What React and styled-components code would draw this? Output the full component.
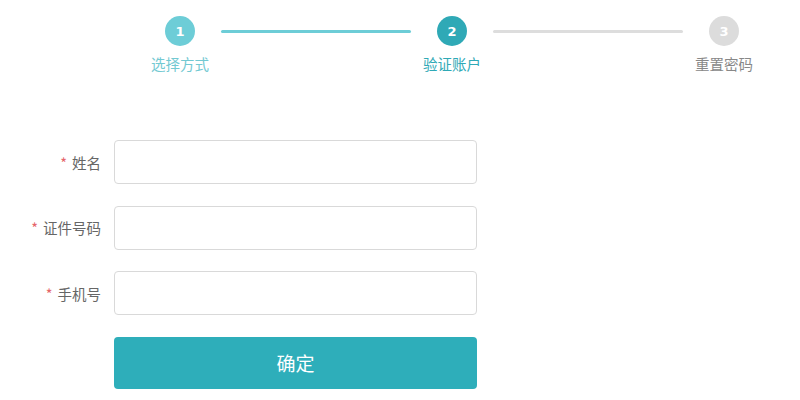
import React from "react";
import styled, { createGlobalStyle } from "styled-components";

const Global = createGlobalStyle`
  body {
    margin: 0;
    background: #fff;
    font-family: "Noto Sans CJK SC", "Noto Sans", sans-serif;
  }
`;

const Page = styled.div`
  width: 800px;
  height: 400px;
  overflow: hidden;
`;

const Steps = styled.div`
  display: flex;
  align-items: flex-start;
  width: 604px;
  margin-left: 150px;
  padding-top: 16px;
`;

const Step = styled.div`
  width: 60px;
  display: flex;
  flex-direction: column;
  align-items: center;
`;

const Dot = styled.div`
  width: 30px;
  height: 30px;
  border-radius: 50%;
  background: ${(p) => p.$bg};
  color: #fff;
  font-family: "DejaVu Sans", sans-serif;
  font-weight: bold;
  font-size: 13px;
  display: flex;
  align-items: center;
  justify-content: center;
`;

const StepLabel = styled.div`
  margin-top: 8px;
  font-size: 14.5px;
  line-height: 20px;
  white-space: nowrap;
  color: ${(p) => p.$color};
`;

const Line = styled.div`
  flex: 1;
  height: 3px;
  margin: 14px 11px 0;
  border-radius: 2px;
  background: ${(p) => p.$bg};
`;

const Form = styled.div`
  margin-top: 66px;
  display: flex;
  flex-direction: column;
  gap: 21.5px;
`;

const Row = styled.div`
  display: flex;
  align-items: center;
`;

const Label = styled.div`
  width: 101px;
  margin-right: 13px;
  text-align: right;
  font-size: 14.5px;
  color: #666;
  white-space: nowrap;
`;

const Star = styled.span`
  color: #e5666a;
  margin-right: 5px;
`;

const Input = styled.input`
  box-sizing: border-box;
  width: 363px;
  height: 44px;
  border: 1px solid #d9d9d9;
  border-radius: 4px;
  outline: none;
  padding: 0 10px;
  font-size: 14px;
`;

const Button = styled.button`
  margin-left: 114px;
  width: 363px;
  height: 52px;
  border: none;
  border-radius: 4px;
  background: #2eaeba;
  color: #fff;
  font-family: "Noto Sans CJK SC", sans-serif;
  font-size: 19px;
  cursor: pointer;
`;

const steps = [
  { n: 1, text: "选择方式", bg: "#6dcdd7", color: "#73c9d2" },
  { n: 2, text: "验证账户", bg: "#2fa9b6", color: "#2fa9b6" },
  { n: 3, text: "重置密码", bg: "#dcdcdc", color: "#888" },
];

const fields = ["姓名", "证件号码", "手机号"];

export default function App() {
  return (
    <Page>
      <Global />
      <Steps>
        {steps.map((s, i) => (
          <React.Fragment key={s.n}>
            {i > 0 && <Line $bg={i === 1 ? "#6dcdd7" : "#dddddd"} />}
            <Step>
              <Dot $bg={s.bg}>{s.n}</Dot>
              <StepLabel $color={s.color}>{s.text}</StepLabel>
            </Step>
          </React.Fragment>
        ))}
      </Steps>
      <Form>
        {fields.map((f) => (
          <Row key={f}>
            <Label>
              <Star>*</Star>
              {f}
            </Label>
            <Input />
          </Row>
        ))}
        <Button>确定</Button>
      </Form>
    </Page>
  );
}
